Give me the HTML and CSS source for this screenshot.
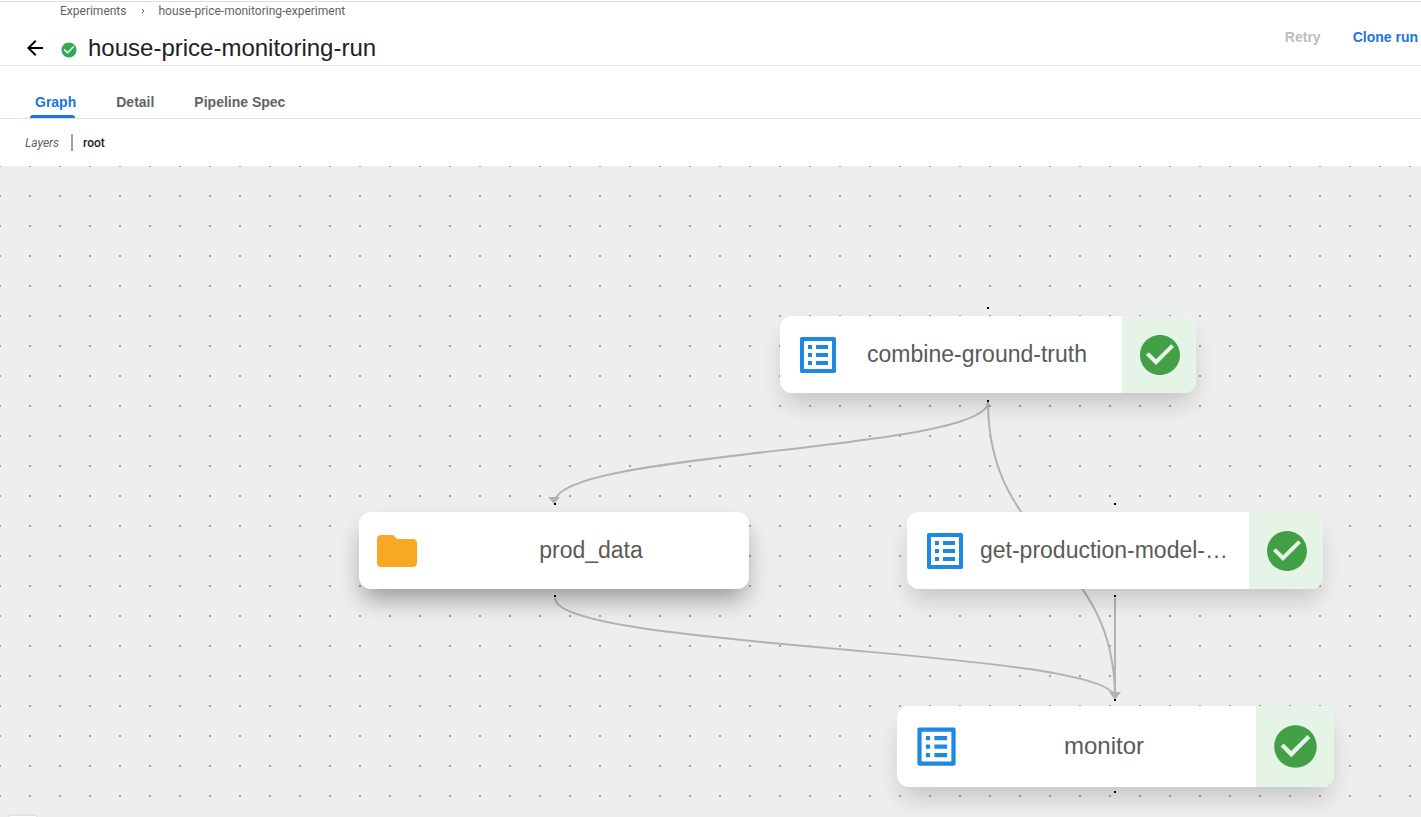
FILE: index.html
```html
<!DOCTYPE html>
<html lang="en">
<head>
<meta charset="utf-8">
<title>house-price-monitoring-run</title>
<link rel="stylesheet" href="styles.css">
</head>
<body>
<svg class="defs" width="0" height="0" aria-hidden="true">
  <symbol id="list" viewBox="0 0 24 24"><path d="M19 5v14H5V5h14m1.1-2H3.9c-.5 0-.9.4-.9.9v16.2c0 .4.4.9.9.9h16.2c.4 0 .9-.5.9-.9V3.9c0-.5-.5-.9-.9-.9zM11 7h6v2h-6V7zm0 4h6v2h-6v-2zm0 4h6v2h-6zM7 7h2v2H7zm0 4h2v2H7zm0 4h2v2H7z"/></symbol>
  <symbol id="check" viewBox="0 0 24 24"><path d="M12 2C6.48 2 2 6.48 2 12s4.48 10 10 10 10-4.48 10-10S17.52 2 12 2zm-2 15l-5-5 1.41-1.41L10 14.17l7.590-7.590L19 8l-9 9z"/></symbol>
  <symbol id="folder" viewBox="0 0 24 24"><path d="M10 4H4c-1.100 0-1.990.9-1.990 2L2 18c0 1.100.9 2 2 2h16c1.100 0 2-.9 2-2V8c0-1.100-.9-2-2-2h-8l-2-2z"/></symbol>
</svg>
<header class="header">
  <div class="heading">
    <nav class="crumbs" aria-label="Breadcrumb">
      <a href="#experiments">Experiments</a>
      <svg class="chevron" viewBox="0 0 12 12" aria-hidden="true"><path d="M5 4l2 2-2 2"/></svg>
      <a href="#experiment">house-price-monitoring-experiment</a>
    </nav>
    <div class="title-row">
      <button class="back" type="button" aria-label="Back"><svg viewBox="0 0 24 24"><path d="M20 11H7.830l5.590-5.590L12 4l-8 8 8 8 1.410-1.410L7.830 13H20v-2z"/></svg></button>
      <svg class="run-status" aria-hidden="true"><use href="#check"/></svg>
      <h1 class="title">house-price-monitoring-run</h1>
    </div>
  </div>
  <div class="actions">
    <button class="action" type="button" disabled>Retry</button>
    <button class="action" type="button">Clone run</button>
  </div>
</header>
<div class="tabs" role="tablist">
  <button class="tab active" type="button" role="tab" aria-selected="true">Graph</button>
  <button class="tab" type="button" role="tab" aria-selected="false">Detail</button>
  <button class="tab" type="button" role="tab" aria-selected="false">Pipeline Spec</button>
</div>
<div class="layers">
  <span class="layers-label">Layers</span>
  <button class="layer" type="button">root</button>
</div>
<main class="canvas">
  <svg class="edges" aria-hidden="true">
    <path class="edge" d="M988 236C988 285 555 285 555 336"/>
    <path class="edge" d="M988 236C988 384 1115 384 1115 532"/>
    <path class="edge" d="M555 432C555 483 1115 483 1115 532"/>
    <path class="edge" d="M1115 432V532"/>
    <path class="arrow" d="M548 331h12l-6 7zM1109 526h12l-6 8z"/>
  </svg>
  <div class="node combine">
    <svg class="node-icon"><use href="#list"/></svg><span class="name">combine-ground-truth</span>
    <span class="state"><svg><use href="#check"/></svg></span>
  </div>
  <div class="node artifact">
    <svg class="node-icon"><use href="#folder"/></svg><span class="name">prod_data</span>
  </div>
  <div class="node model">
    <svg class="node-icon"><use href="#list"/></svg><span class="name">get-production-model-…</span>
    <span class="state"><svg><use href="#check"/></svg></span>
  </div>
  <div class="node monitor">
    <svg class="node-icon"><use href="#list"/></svg><span class="name">monitor</span>
    <span class="state"><svg><use href="#check"/></svg></span>
  </div>
  <svg class="edges handles" aria-hidden="true">
    <path d="M987 141h2v2h-2zM987 234h2v2h-2zM554 337h2v2h-2zM554 429h2v2h-2zM1114 337h2v2h-2zM1114 429h2v2h-2zM1114 533h2v2h-2zM1114 625h2v2h-2z"/>
  </svg>
  <div class="controls"></div>
</main>
</body>
</html>
```
FILE: styles.css
```css
* { box-sizing: border-box; }
body {
  margin: 0;
  padding-top: 1px;
  height: 100vh;
  display: flex;
  flex-direction: column;
  overflow: hidden;
  background: #fff;
  font-family: "Liberation Sans", Arial, sans-serif;
}
button {
  padding: 0;
  border: 0;
  background: none;
  font: inherit;
  cursor: pointer;
}
.defs { position: absolute; }
.header {
  display: flex;
  justify-content: space-between;
  border-top: 1px solid #ddd;
  border-bottom: 1px solid #e8e8e8;
}
.heading { padding-bottom: 2px; }
.crumbs {
  display: flex;
  align-items: center;
  height: 18px;
  padding-left: 60px;
  gap: 10px;
  font: 12px/18px Roboto, sans-serif;
}
.crumbs a { color: #5f6368; text-decoration: none; }
.chevron { width: 12px; height: 12px; fill: none; stroke: #5f6368; }
.title-row { display: flex; align-items: center; height: 43px; padding: 13px 0 0 23px; }
.back, .back svg { display: block; width: 24px; height: 24px; }
.run-status { width: 18px; height: 18px; margin: 3px 10px 0 13px; fill: #34a853; }
.title { margin: 0; font-size: 24px; line-height: 28px; font-weight: 400; color: #202124; }
.actions { display: flex; gap: 32px; padding-right: 3px; }
.action { height: 70px; margin-bottom: -7px; font-size: 14px; font-weight: 700; color: #1a73e8; }
.action:disabled { color: #bdbdbd; cursor: default; }
.tabs {
  display: flex;
  gap: 30px;
  padding: 19px 0 0 30px;
  border-bottom: 1px solid #e0e0e0;
}
.tab {
  position: relative;
  height: 33px;
  padding: 0 5px;
  font-size: 14px;
  font-weight: 700;
  color: #5f6368;
}
.tab.active { color: #1a73e8; }
.tab.active::after {
  content: "";
  position: absolute;
  left: 0;
  right: 6px;
  bottom: 0;
  height: 3px;
  border-radius: 3px 3px 0 0;
  background: #1a73e8;
}
.layers {
  display: flex;
  align-items: center;
  height: 47px;
  padding-left: 25px;
  font: 12px/18px Roboto, sans-serif;
}
.layers-label { padding-right: 12px; font-style: italic; color: #5f6368; }
.layer { height: 17px; padding-left: 10px; border-left: 2px solid #9aa0a6; font-weight: 500; color: #202124; }
.canvas {
  position: relative;
  flex: 1;
  overflow: hidden;
  background: radial-gradient(circle at 15px 15px, #919191 0, #aaa 1px, transparent 1px) 15px 15px / 30px 30px #eee;
}
.edges { position: absolute; inset: 0; width: 100%; height: 100%; pointer-events: none; }
.edge { fill: none; stroke: #b1b1b7; stroke-width: 2; }
.arrow { fill: #b1b1b7; }
.node {
  position: absolute;
  display: flex;
  align-items: center;
  width: 416px;
  height: 77px;
  padding-left: 14px;
  border-radius: 12px;
  overflow: hidden;
  background: #fff;
  box-shadow: 0 14px 24px -4px rgba(0, 0, 0, .18);
}
.combine { left: 780px; top: 150px; }
.artifact { left: 359px; top: 346px; width: 390px; box-shadow: 0 14px 24px -4px rgba(0, 0, 0, .36); }
.model { left: 907px; top: 346px; }
.monitor { left: 897px; top: 540px; width: 437px; height: 81px; }
.node-icon { flex: none; width: 48px; height: 48px; fill: #1e88e5; }
.artifact .node-icon { fill: #f9a825; }
.name {
  flex: 1;
  min-width: 0;
  margin: 0 18px 0 8px;
  padding-bottom: 2px;
  overflow: hidden;
  text-overflow: ellipsis;
  white-space: nowrap;
  text-align: center;
  font-size: 23px;
  line-height: 28px;
  color: #5a5a5a;
}
.artifact .name { margin: 0 0 0 12px; }
.state {
  display: flex;
  align-items: center;
  justify-content: center;
  width: 74px;
  height: 100%;
  padding-left: 2px;
  background: #e6f4e8;
}
.state svg { width: 48px; height: 48px; fill: #43a047; }
.monitor .node-icon, .monitor .state svg { width: 51px; height: 51px; }
.monitor .state { width: 78px; padding-left: 0; }
.monitor .name { font-size: 24px; }
.controls {
  position: absolute;
  left: 10px;
  bottom: -20px;
  width: 26px;
  height: 21px;
  background: #fefefe;
  box-shadow: 0 0 2px 1px rgba(0, 0, 0, .08);
}
```
